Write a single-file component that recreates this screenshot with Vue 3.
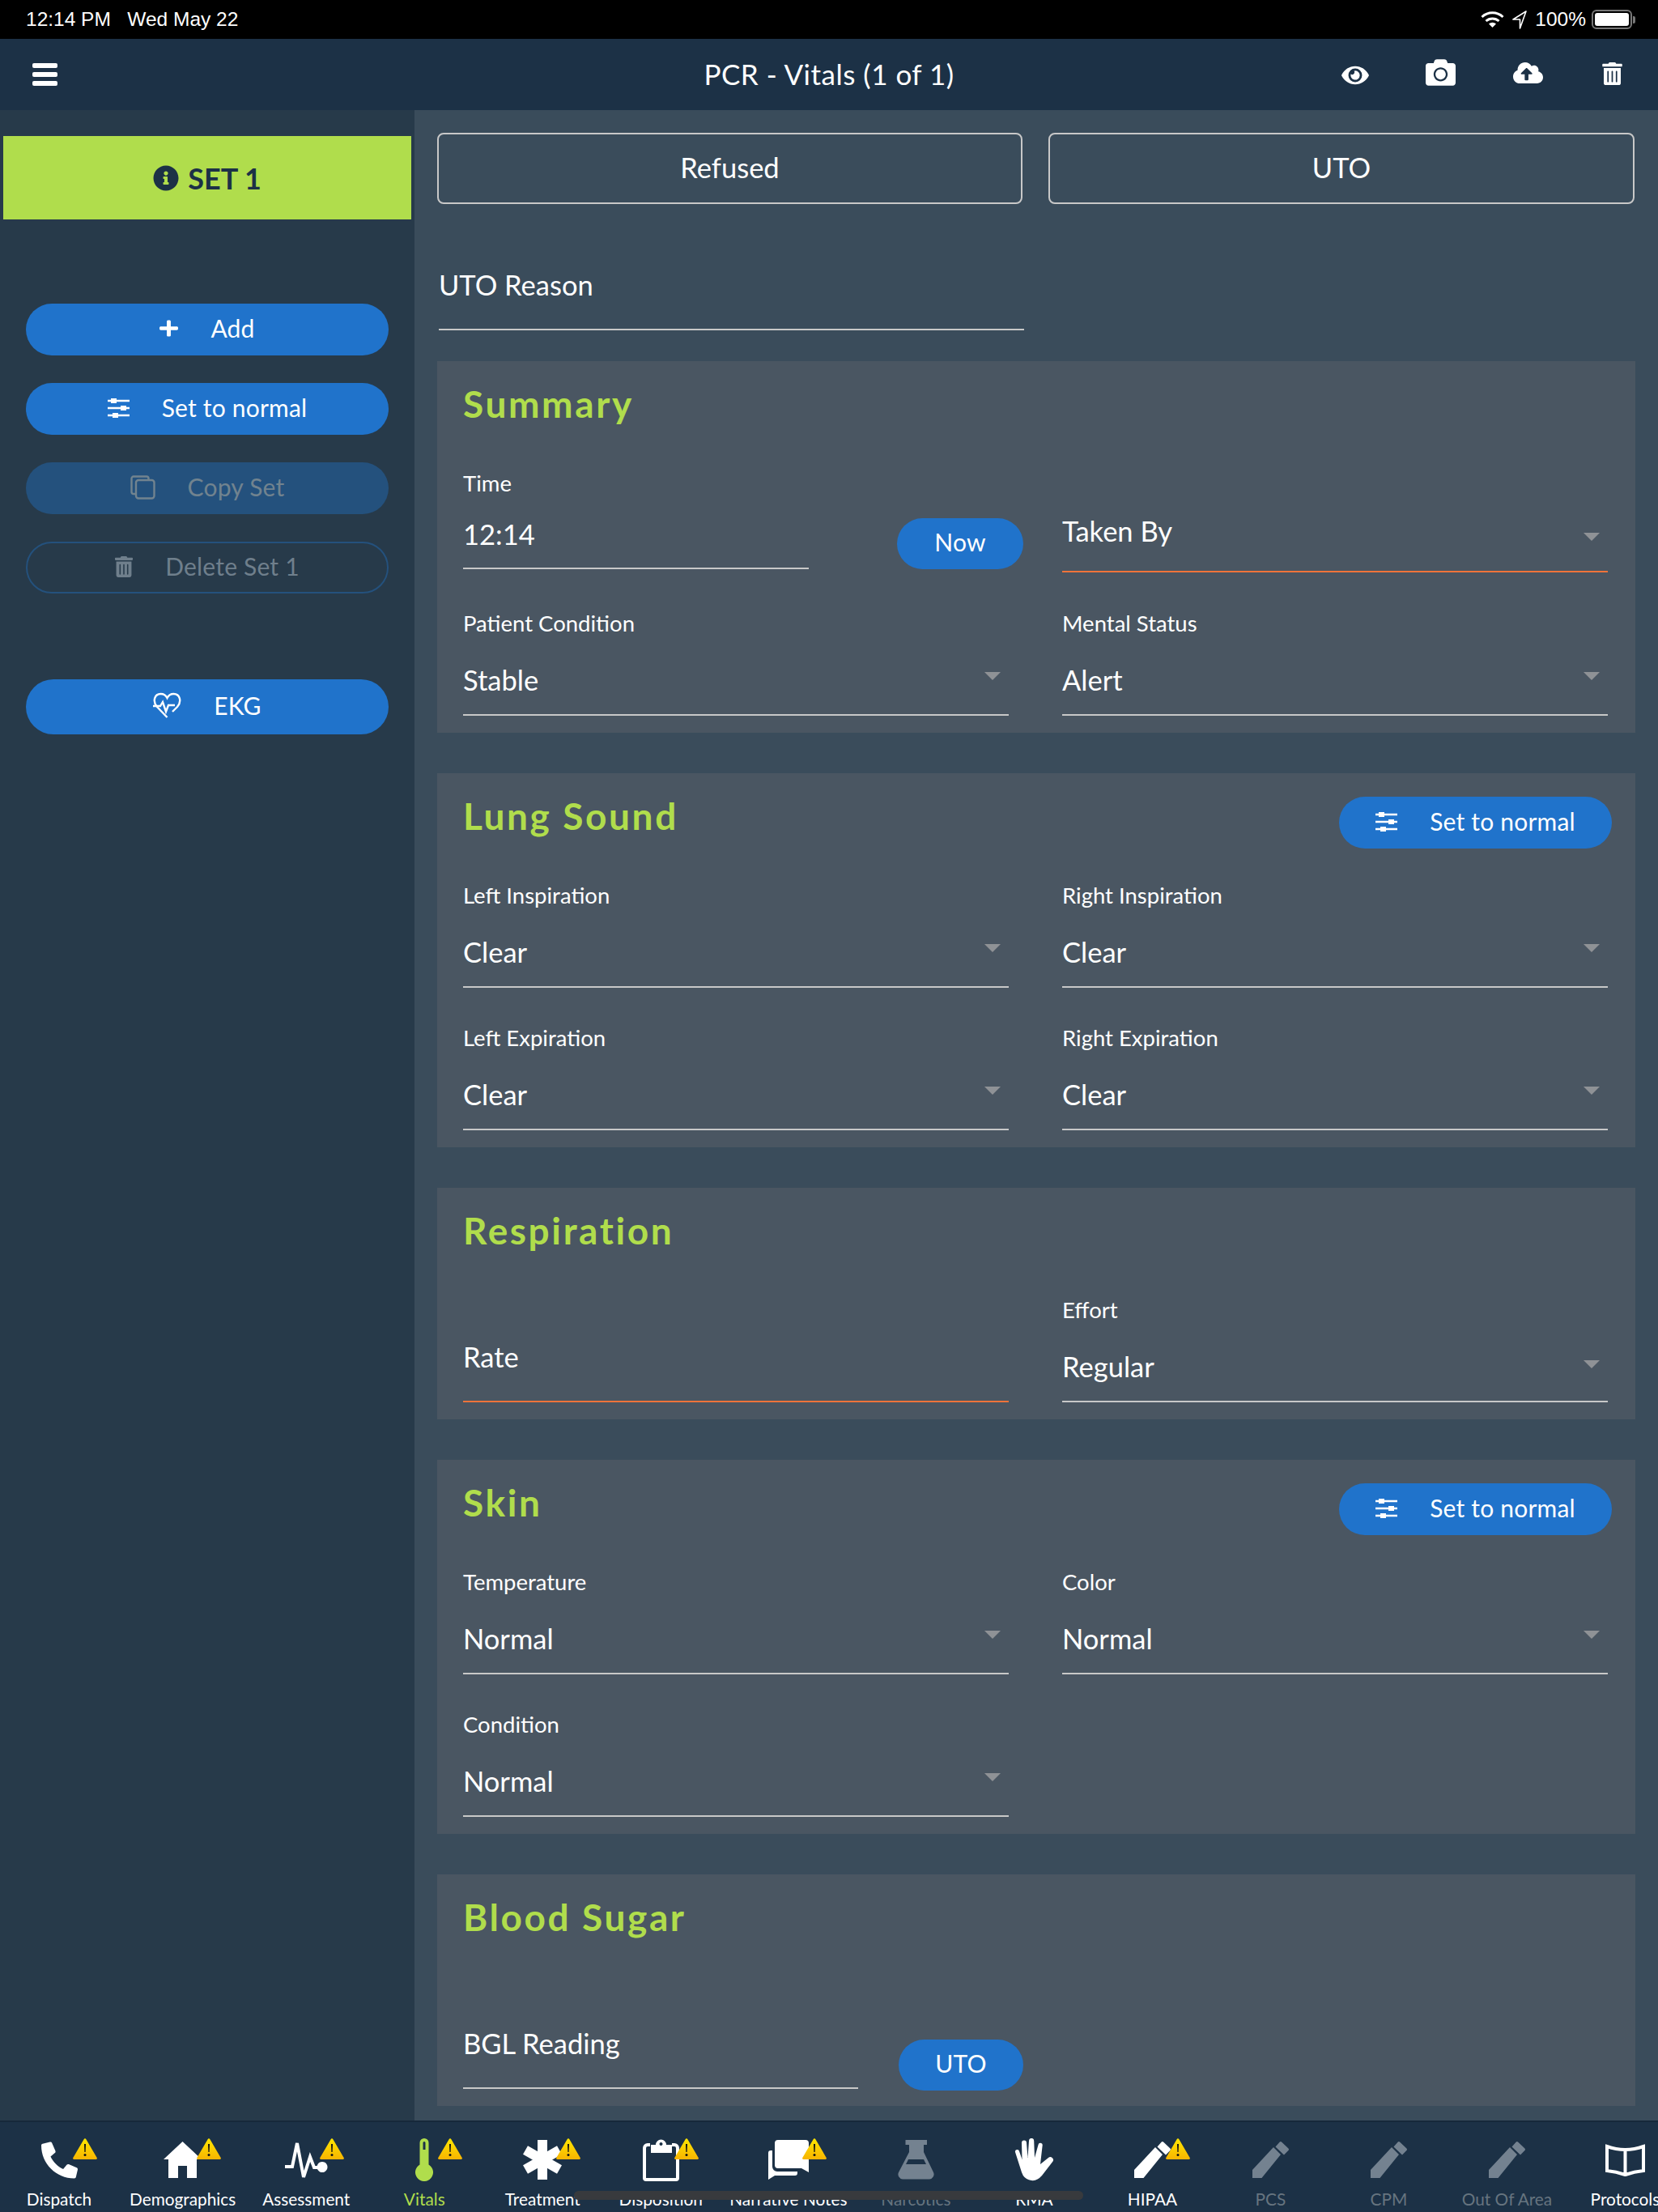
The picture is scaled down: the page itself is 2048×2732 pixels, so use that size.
<script setup>
const sliders = [
  { d: "M0 3H27M0 12H27M0 21H27", line: true },
  { d: "M4 0H11V6H4ZM16 9H23V15H16ZM6 18H13V24H6Z" },
];

const pen = [{ d: "M0 35L26 7L35 16L11.5 45H0ZM33.5 .8a2 2 0 0 1 2.8 0L44.2 8.2a2 2 0 0 1 .2 2.8L39 16.5L28.5 6.5Z" }];

const icons = {
  phone: {
    w: 45, h: 46, view: "0 0 512 512", flip: true,
    shapes: [{ d: "M493.4 24.6l-104-24c-11.3-2.6-22.9 3.3-27.5 13.9l-48 112c-4.2 9.8-1.4 21.3 6.9 28l60.6 49.6c-36 76.7-98.9 140.5-177.2 177.2l-49.6-60.6c-6.8-8.3-18.2-11.1-28-6.9l-112 48C3.9 366.5-2 378.1.6 389.4l24 104C27.1 504.2 36.7 512 48 512c256.1 0 464-207.5 464-464 0-11.2-7.7-20.9-18.6-23.4z" }],
  },
  home: {
    w: 47, h: 45, view: "0 0 47 45",
    shapes: [{ d: "M23.5 0L47 22H41V45H29V30H18V45H6V22H0Z" }],
  },
  pulse: {
    w: 53, h: 48, view: "0 0 53 48", sw: 4,
    shapes: [
      { d: "M0 32H9L15 3L23 45L31 20L36 33H46", line: true },
      { d: "M46 26a6.500 6.500 0 1 0 .01 0Z" },
    ],
  },
  thermo: {
    w: 22, h: 53, view: "0 0 22 53",
    shapes: [{ d: "M5.500 5.500a5.500 5.500 0 0 1 11 0V32.500a11 11 0 1 1-11 0ZM9.500 5.500a1.500 1.500 0 0 1 3 0V14h-3Z" }],
  },
  star: {
    w: 48, h: 49, view: "0 0 48 49", sw: 12,
    shapes: [{ d: "M24 0V49M3 12.500L45 36.500M3 36.500L45 12.500", line: true }],
  },
  clipboard: {
    w: 45, h: 53, view: "0 0 45 53", sw: 4,
    shapes: [
      { d: "M9 8H6a4 4 0 0 0-4 4v37a2 2 0 0 0 2 2h37a2 2 0 0 0 2-2V12a4 4 0 0 0-4-4h-3", line: true },
      { d: "M10 8h6a6.500 6.500 0 0 1 13 0h7v10H10ZM22.500 5a2 2 0 1 0 .01 0Z" },
    ],
  },
  comments: {
    w: 50, h: 49, view: "0 0 50 49",
    shapes: [{ d: "M12 0H46a4 4 0 0 1 4 4V40L41 35H12a4 4 0 0 1-4-4V4a4 4 0 0 1 4-4ZM0 16a3 3 0 0 1 3-3H5V33a6 6 0 0 0 6 6H36v2a3 3 0 0 1-3 3H8L0 49Z" }],
  },
  flask: {
    w: 45, h: 49, view: "0 0 45 49",
    shapes: [{ d: "M9.500 0H36V6H32V15L44 40a6 6 0 0 1-5 8.500H6A6 6 0 0 1 1 40L14 15V6H9.500ZM13 24H32L35 30H10Z" }],
  },
  hand: {
    w: 49, h: 53, view: "0 0 49 53",
    shapes: [{ d: "M1 17a2.500 2.500 0 0 1 5-1L9.500 26L9 5.500a3 3 0 0 1 6 0L16.500 24L18 3a3 3 0 0 1 6.200 0L25 24L29.500 8a2.600 2.600 0 0 1 5.200 .6L32 32L42 24a3.600 3.600 0 0 1 5.500 4.500L34 46Q28 53 21 52Q12 51 9 42Z" }],
  },
  pen: { w: 45, h: 45, view: "0 0 45 45", shapes: pen },
  book: {
    w: 49, h: 41, view: "0 0 49 41", sw: 4,
    shapes: [{ d: "M2 4Q13 8 24.500 8T47 4V34Q36 35 24.500 39Q13 35 2 34ZM24.500 8V39", line: true }],
  },
};

const tabs = [
  { label: "Dispatch", icon: "phone", warn: true },
  { label: "Demographics", icon: "home", warn: true },
  { label: "Assessment", icon: "pulse", warn: true },
  { label: "Vitals", icon: "thermo", warn: true, active: true },
  { label: "Treatment", icon: "star", warn: true },
  { label: "Disposition", icon: "clipboard", warn: true },
  { label: "Narrative Notes", icon: "comments", warn: true, tight: true },
  { label: "Narcotics", icon: "flask", off: true },
  { label: "RMA", icon: "hand" },
  { label: "HIPAA", icon: "pen", warn: true },
  { label: "PCS", icon: "pen", off: true },
  { label: "CPM", icon: "pen", off: true },
  { label: "Out Of Area", icon: "pen", off: true },
  { label: "Protocols", icon: "book" },
];

const lung = [
  { label: "Left Inspiration", value: "Clear" },
  { label: "Right Inspiration", value: "Clear" },
  { label: "Left Expiration", value: "Clear" },
  { label: "Right Expiration", value: "Clear" },
];

const skin = [
  { label: "Temperature", value: "Normal" },
  { label: "Color", value: "Normal" },
  { label: "Condition", value: "Normal" },
];
</script>

<template>
  <div class="page">
    <div class="status">
      <span>12:14 PM&nbsp;&nbsp;&nbsp;Wed May 22</span>
      <div class="status-right">
        <svg width="29" height="20" viewBox="0 0 29 20" fill="none" stroke="#fff" stroke-width="3">
          <path d="M1.500 7a19 19 0 0 1 26 0M6.500 12a12 12 0 0 1 16 0" />
          <path d="M14.500 20L10 15.500a6.500 6.500 0 0 1 9 0Z" fill="#fff" stroke="none" />
        </svg>
        <svg class="arrow-nav" width="18" height="23" viewBox="0 0 18 23" fill="none" stroke="#fff" stroke-width="1.6">
          <path d="M17 1L1 11H9.500V22Z" stroke-linejoin="round" />
        </svg>
        <span class="pct">100%</span>
        <div class="battery"><div class="battery-fill"></div></div>
        <div class="battery-nub"></div>
      </div>
    </div>

    <header class="header">
      <div class="bars"><i></i><i></i><i></i></div>
      <div class="title">PCR - Vitals (1 of 1)</div>
      <div class="actions">
        <span class="action action-eye">
          <svg width="34" height="30" viewBox="0 0 576 512" fill="currentColor"><path d="M572.52 241.4C518.29 135.59 410.93 64 288 64S57.68 135.64 3.48 241.41a32.35 32.35 0 0 0 0 29.19C57.71 376.41 165.07 448 288 448s230.32-71.64 284.52-177.41a32.35 32.35 0 0 0 0-29.19zM288 400a144 144 0 1 1 144-144 143.93 143.93 0 0 1-144 144zm0-240a95.31 95.31 0 0 0-25.31 3.79 47.85 47.85 0 0 1-66.9 66.9A95.78 95.78 0 1 0 288 160z" /></svg>
        </span>
        <span class="action action-up">
          <svg width="37" height="37" viewBox="0 0 512 512" fill="currentColor"><path d="M512 144v288c0 26.5-21.5 48-48 48H48c-26.5 0-48-21.5-48-48V144c0-26.5 21.5-48 48-48h88l12.3-32.9c7-18.7 24.9-31.1 44.9-31.1h125.5c20 0 37.9 12.4 44.9 31.1L376 96h88c26.5 0 48 21.5 48 48zM376 288c0-66.2-53.800-120-120-120s-120 53.800-120 120 53.800 120 120 120 120-53.800 120-120zm-32 0c0 48.500-39.500 88-88 88s-88-39.500-88-88 39.500-88 88-88 88 39.500 88 88z" /></svg>
        </span>
        <span class="action action-up action-cloud">
          <svg width="37" height="32" viewBox="0 0 640 512" fill="currentColor"><path d="M537.6 226.6c4.1-10.7 6.4-22.4 6.4-34.6 0-53-43-96-96-96-19.7 0-38.1 6-53.3 16.2C367 64.2 315.3 32 256 32c-88.4 0-160 71.6-160 160 0 2.7.1 5.4.2 8.1C40.2 219.8 0 273.2 0 336c0 79.5 64.5 144 144 144h368c70.7 0 128-57.3 128-128 0-61.9-44-113.6-102.4-125.4zM393.4 288H328v112c0 8.8-7.2 16-16 16h-48c-8.8 0-16-7.2-16-16V288h-65.4c-14.3 0-21.4-17.2-11.3-27.3l105.4-105.4c6.2-6.2 16.4-6.2 22.6 0l105.4 105.4c10.1 10.1 2.9 27.3-11.3 27.3z" /></svg>
        </span>
        <span class="action action-trash">
          <svg width="25" height="28" viewBox="0 0 448 512" fill="currentColor"><path d="M32 464a48 48 0 0 0 48 48h288a48 48 0 0 0 48-48V128H32zm272-256a16 16 0 0 1 32 0v224a16 16 0 0 1-32 0zm-96 0a16 16 0 0 1 32 0v224a16 16 0 0 1-32 0zm-96 0a16 16 0 0 1 32 0v224a16 16 0 0 1-32 0zM432 32H312l-9.4-18.7A24 24 0 0 0 281.1 0H166.8a23.72 23.72 0 0 0-21.4 13.3L136 32H16A16 16 0 0 0 0 48v32a16 16 0 0 0 16 16h416a16 16 0 0 0 16-16V48a16 16 0 0 0-16-16z" /></svg>
        </span>
      </div>
    </header>

    <div class="main">
      <aside class="sidebar">
        <div class="set-tile">
          <svg width="32" height="32" viewBox="0 0 512 512" fill="currentColor"><path d="M256 8C119.043 8 8 119.083 8 256c0 136.997 111.043 248 248 248s248-111.003 248-248C504 119.083 392.957 8 256 8zm0 110c23.196 0 42 18.804 42 42s-18.804 42-42 42-42-18.804-42-42 18.804-42 42-42zm56 254c0 6.627-5.373 12-12 12h-88c-6.627 0-12-5.373-12-12v-24c0-6.627 5.373-12 12-12h12v-64h-12c-6.627 0-12-5.373-12-12v-24c0-6.627 5.373-12 12-12h64c6.627 0 12 5.373 12 12v100h12c6.627 0 12 5.373 12 12v24z" /></svg>
          SET 1
        </div>
        <div class="side-buttons">
          <button class="pill">
            <svg width="23" height="23" viewBox="0 0 448 512" fill="currentColor" preserveAspectRatio="none"><path d="M416 208H272V64c0-17.67-14.33-32-32-32h-32c-17.67 0-32 14.33-32 32v144H32c-17.67 0-32 14.33-32 32v32c0 17.67 14.33 32 32 32h144v144c0 17.67 14.33 32 32 32h32c17.67 0 32-14.33 32-32V304h144c17.67 0 32-14.33 32-32v-32c0-17.67-14.33-32-32-32z" /></svg>
            Add
          </button>
          <button class="pill">
            <svg width="27" height="24" viewBox="0 0 27 24" fill="currentColor">
              <path v-for="s in sliders" :key="s.d" :d="s.d" :class="{ line: s.line }" stroke-width="2.4" />
            </svg>
            Set to normal
          </button>
          <button class="pill pill-copy">
            <svg width="31" height="30" viewBox="0 0 31 30" fill="none" stroke="currentColor" stroke-width="2.4">
              <path d="M7 23H4a2.500 2.500 0 0 1-2.500-2.500V4A2.500 2.500 0 0 1 4 1.500H20A2.500 2.500 0 0 1 22.500 4V6" />
              <rect x="7" y="6" width="22.500" height="22.500" rx="3" />
            </svg>
            Copy Set
          </button>
          <button class="pill pill-delete">
            <svg width="22" height="26" viewBox="0 0 448 512" fill="currentColor" preserveAspectRatio="none"><path d="M32 464a48 48 0 0 0 48 48h288a48 48 0 0 0 48-48V128H32zm272-256a16 16 0 0 1 32 0v224a16 16 0 0 1-32 0zm-96 0a16 16 0 0 1 32 0v224a16 16 0 0 1-32 0zm-96 0a16 16 0 0 1 32 0v224a16 16 0 0 1-32 0zM432 32H312l-9.4-18.7A24 24 0 0 0 281.1 0H166.8a23.72 23.72 0 0 0-21.4 13.3L136 32H16A16 16 0 0 0 0 48v32a16 16 0 0 0 16 16h416a16 16 0 0 0 16-16V48a16 16 0 0 0-16-16z" /></svg>
            Delete Set 1
          </button>
          <button class="pill pill-ekg">
            <svg width="35" height="33" viewBox="0 0 35 33" fill="none" stroke="currentColor" stroke-width="2.4">
              <path d="M17.500 31L5 18C-1 11 2 2 9.500 2C13 2 16 4 17.500 7C19 4 22 2 25.500 2C33 2 36 11 30 18L24 24" />
              <path d="M0 17H9L12 12L16 24L19 16H27" />
            </svg>
            EKG
          </button>
        </div>
      </aside>

      <section class="content">
        <div class="top-buttons">
          <button class="outline">Refused</button>
          <button class="outline">UTO</button>
        </div>
        <div class="uto-reason">UTO Reason</div>

        <div class="card">
          <div class="card-head"><h2>Summary</h2></div>
          <div class="grid">
            <div class="time-row">
              <div class="time-field">
                <div class="label">Time</div>
                <div class="box box-time">12:14</div>
              </div>
              <button class="pill pill-now">Now</button>
            </div>
            <div class="box box-taken">
              <span>Taken By</span>
              <i class="caret caret-low"></i>
            </div>
            <div>
              <div class="label">Patient Condition</div>
              <div class="box">Stable<i class="caret"></i></div>
            </div>
            <div>
              <div class="label">Mental Status</div>
              <div class="box">Alert<i class="caret"></i></div>
            </div>
          </div>
        </div>

        <div class="card">
          <div class="card-head">
            <h2>Lung Sound</h2>
            <button class="pill pill-head">
              <svg width="27" height="24" viewBox="0 0 27 24" fill="currentColor">
                <path v-for="s in sliders" :key="s.d" :d="s.d" :class="{ line: s.line }" stroke-width="2.4" />
              </svg>
              Set to normal
            </button>
          </div>
          <div class="grid">
            <div v-for="f in lung" :key="f.label">
              <div class="label">{{ f.label }}</div>
              <div class="box">{{ f.value }}<i class="caret"></i></div>
            </div>
          </div>
        </div>

        <div class="card">
          <div class="card-head"><h2>Respiration</h2></div>
          <div class="grid">
            <div class="box box-rate">Rate</div>
            <div>
              <div class="label">Effort</div>
              <div class="box">Regular<i class="caret caret-mid"></i></div>
            </div>
          </div>
        </div>

        <div class="card">
          <div class="card-head">
            <h2>Skin</h2>
            <button class="pill pill-head">
              <svg width="27" height="24" viewBox="0 0 27 24" fill="currentColor">
                <path v-for="s in sliders" :key="s.d" :d="s.d" :class="{ line: s.line }" stroke-width="2.4" />
              </svg>
              Set to normal
            </button>
          </div>
          <div class="grid">
            <div v-for="f in skin" :key="f.label">
              <div class="label">{{ f.label }}</div>
              <div class="box">{{ f.value }}<i class="caret"></i></div>
            </div>
          </div>
        </div>

        <div class="card">
          <div class="card-head"><h2>Blood Sugar</h2></div>
          <div class="grid">
            <div class="bgl-row">
              <div class="box box-bgl">BGL Reading</div>
              <button class="pill pill-now pill-uto">UTO</button>
            </div>
          </div>
        </div>
      </section>
    </div>

    <nav class="tabs">
      <div
        v-for="t in tabs"
        :key="t.label"
        class="tab"
        :class="{ active: t.active, off: t.off, tight: t.tight }"
      >
        <div class="tab-icon">
          <svg
            :width="icons[t.icon].w"
            :height="icons[t.icon].h"
            :viewBox="icons[t.icon].view"
            :class="{ flip: icons[t.icon].flip }"
            :stroke-width="icons[t.icon].sw"
            fill="currentColor"
          >
            <path
              v-for="s in icons[t.icon].shapes"
              :key="s.d"
              :d="s.d"
              :class="{ line: s.line }"
              fill-rule="evenodd"
            />
          </svg>
          <svg v-if="t.warn" class="warn" width="30" height="26" viewBox="0 0 30 26">
            <defs>
              <linearGradient id="warnfill" x1="0" y1="0" x2="0" y2="1">
                <stop offset="0" stop-color="#ffe600" />
                <stop offset="1" stop-color="#f7b400" />
              </linearGradient>
            </defs>
            <path d="M13.600 1.200a1.600 1.600 0 0 1 2.800 0L29.700 24a1.300 1.300 0 0 1-1.100 2H1.400a1.300 1.300 0 0 1-1.100-2Z" fill="url(#warnfill)" />
            <path d="M14 7h2l-.4 10h-1.200Z" fill="#111" />
            <circle cx="15" cy="20.500" r="1.500" fill="#111" />
          </svg>
        </div>
        <div class="tab-label">{{ t.label }}</div>
      </div>
      <div class="home-bar"></div>
    </nav>
  </div>
</template>

<style scoped>
.page {
  position: relative;
  width: 2048px;
  height: 2732px;
  display: flex;
  flex-direction: column;
  overflow: hidden;
  font-family: "Lato", "Noto Sans", sans-serif;
  color: #fff;
  background: #3a4c5b;
}
button {
  font-family: inherit;
  color: inherit;
}

.status {
  height: 48px;
  flex: none;
  background: #000;
  display: flex;
  align-items: center;
  justify-content: space-between;
  padding: 0 28px 0 32px;
  font-family: "Liberation Sans", sans-serif;
  font-size: 24.500px;
}
.status-right {
  display: flex;
  align-items: center;
}
.arrow-nav {
  margin-left: 10px;
}
.pct {
  margin-left: 10px;
}
.battery {
  width: 50px;
  height: 24px;
  margin-left: 7px;
  border: 2px solid #777;
  border-radius: 6px;
  padding: 2px;
  box-sizing: border-box;
}
.battery-fill {
  height: 100%;
  background: #fff;
  border-radius: 3px;
}
.battery-nub {
  width: 3px;
  height: 9px;
  margin-left: 1px;
  background: #777;
  border-radius: 0 2px 2px 0;
}

.header {
  height: 88px;
  flex: none;
  background: #1c3146;
  display: grid;
  grid-template-columns: 1fr auto 1fr;
  align-items: center;
}
.bars {
  margin-left: 40px;
  width: 31px;
  display: flex;
  flex-direction: column;
  gap: 5px;
}
.bars i {
  display: block;
  height: 6px;
  border-radius: 2px;
  background: #fff;
}
.title {
  font-size: 35px;
  letter-spacing: 0.5px;
  padding-bottom: 3px;
}
.actions {
  display: flex;
  align-items: center;
  justify-content: flex-end;
  padding-right: 4px;
}
.action {
  width: 106px;
  box-sizing: border-box;
  display: flex;
  align-items: center;
  justify-content: center;
  color: #fff;
}
.action-eye {
  padding-left: 2px;
  margin-top: 2px;
}
.action-up {
  margin-bottom: 5px;
}
.action-cloud {
  padding-left: 4px;
}
.action-trash {
  margin-bottom: 2px;
}

.main {
  flex: 1;
  display: flex;
  min-height: 0;
}
.sidebar {
  width: 512px;
  flex: none;
  background: #273a4a;
  box-sizing: border-box;
  padding-top: 32px;
}
.set-tile {
  margin: 0 4px;
  height: 103px;
  background: #b0dd4c;
  color: #1c3146;
  display: flex;
  align-items: center;
  justify-content: center;
  gap: 11px;
  font-size: 36px;
  font-weight: 700;
}
.side-buttons {
  margin-top: 104px;
  padding: 0 32px;
  display: flex;
  flex-direction: column;
  gap: 34px;
}
.pill {
  height: 64px;
  border: 0;
  border-radius: 34px;
  background: #2073cb;
  display: flex;
  align-items: center;
  justify-content: center;
  gap: 40px;
  font-size: 30px;
  letter-spacing: 0.2px;
  padding: 0 0 5px;
}
.pill svg {
  margin-top: 2px;
}
.pill-copy {
  background: #24517d;
  color: #71838f;
}
.pill-delete {
  background: transparent;
  border: 2px solid #24517d;
  color: #6f7f8c;
}
.pill-ekg {
  height: 68px;
  margin-top: 72px;
}
.pill-now {
  width: 156px;
  height: 63px;
  flex: none;
  margin-right: -18px;
}
.pill-uto {
  width: 154px;
  margin-bottom: -2px;
}
.pill-head {
  width: 337px;
  margin: 12px -4px 0 0;
}
.line {
  fill: none;
  stroke: currentColor;
}

.content {
  flex: 1;
  padding: 28px 28px 0 28px;
  min-width: 0;
}
.top-buttons {
  display: grid;
  grid-template-columns: 723px 724px;
  gap: 32px;
}
.outline {
  height: 88px;
  border: 2px solid #c8c8c8;
  border-radius: 8px;
  background: transparent;
  font-size: 34.500px;
  padding: 0 0 3px;
}
.uto-reason {
  width: 723px;
  height: 156px;
  margin-bottom: 38px;
  margin-left: 2px;
  box-sizing: border-box;
  border-bottom: 2px solid #c8c8c8;
  padding-top: 76px;
  font-size: 34.500px;
  line-height: 48px;
}

.card {
  width: 1480px;
  margin-bottom: 50px;
  box-sizing: border-box;
  padding: 0 33px 21px 32px;
  background: #4a5662;
}
.card-head {
  height: 110px;
  display: flex;
  align-items: center;
  justify-content: space-between;
}
h2 {
  margin: 0 0 5px;
  color: #b0dd4c;
  font-size: 46px;
  font-weight: 700;
  letter-spacing: 2.6px;
}
.grid {
  margin-top: 24px;
  display: grid;
  grid-template-columns: 674px 674px;
  column-gap: 66px;
  row-gap: 45px;
}
.label {
  height: 36px;
  line-height: 33px;
  font-size: 27.500px;
}
.box {
  height: 95px;
  box-sizing: border-box;
  padding: 8px 10px 0 0;
  border-bottom: 2px solid #c8c8c8;
  display: flex;
  align-items: center;
  justify-content: space-between;
  font-size: 34.500px;
  line-height: 48px;
}
.caret {
  width: 0;
  height: 0;
  margin-bottom: 10px;
  border-left: 10px solid transparent;
  border-right: 10px solid transparent;
  border-top: 10px solid #8f9296;
}
.caret-low {
  margin: 14px 0 0;
}
.caret-mid {
  margin: 0 0 6px;
}
.time-row {
  display: flex;
  justify-content: space-between;
  align-items: flex-end;
  height: 128px;
}
.time-row .pill-now {
  margin-bottom: 5px;
}
.time-field {
  width: 427px;
  margin-bottom: 5px;
}
.box-time {
  height: 87px;
  padding: 3px 0 0;
}
.box-taken {
  height: 127px;
  padding-top: 27px;
  border-bottom-color: #f0733a;
}
.box-rate {
  height: 131px;
  padding-top: 21px;
  border-bottom-color: #f0733a;
}
.bgl-row {
  height: 131px;
  display: flex;
  justify-content: space-between;
  align-items: flex-end;
}
.box-bgl {
  width: 488px;
  height: 131px;
  padding-top: 21px;
}

.tabs {
  position: relative;
  height: 113px;
  flex: none;
  box-sizing: border-box;
  padding-top: 20px;
  background: #1c3146;
  border-top: 2px solid #16283a;
  display: flex;
  overflow: hidden;
}
.tab {
  min-width: 146px;
  flex: none;
  box-sizing: border-box;
  padding: 0 14px;
  display: flex;
  flex-direction: column;
  align-items: center;
  color: #fff;
}
.tab.tight {
  padding: 0 12px;
}
.tab.active {
  color: #b0dd4c;
}
.tab.off {
  color: #748290;
}
.tab-icon {
  position: relative;
  align-self: stretch;
  height: 53px;
  display: flex;
  align-items: center;
  justify-content: center;
}
.flip {
  transform: scaleX(-1);
}
.warn {
  position: absolute;
  top: 0;
  left: calc(50% + 17px);
}
.tab-label {
  margin-top: 9px;
  height: 26px;
  line-height: 26px;
  font-size: 20.800px;
  white-space: nowrap;
}
.tab.off .tab-label {
  color: #66747f;
}
.home-bar {
  position: absolute;
  left: 709px;
  top: 85px;
  width: 629px;
  height: 11px;
  border-radius: 6px;
  background: #383a3d;
}
</style>
